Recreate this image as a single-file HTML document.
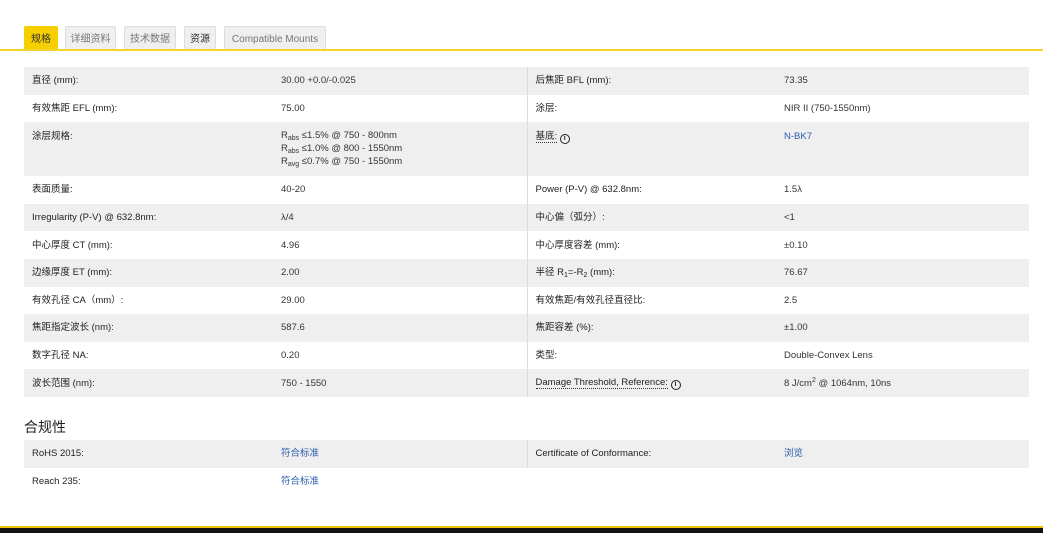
<!DOCTYPE html><html><head><meta charset="utf-8"><style>
body{margin:0;width:1043px;height:533px;overflow:hidden;background:#fff;font-family:"Liberation Sans","Noto Sans CJK SC",sans-serif;font-size:9.5px;color:#333;position:relative}
.tabs{position:absolute;left:0;top:0;width:1043px;height:51px;border-bottom:2px solid #f2d42c;box-sizing:border-box}
.tab{position:absolute;top:26px;height:23px;line-height:25px;background:#efefef;border:1px solid #ddd;border-bottom:none;box-sizing:border-box;text-align:center;color:#777;font-size:10px;border-radius:2px 2px 0 0}
.tab.a{background:#f7cf00;color:#333;border-color:#f7cf00}
table{position:absolute;left:24px;border-collapse:collapse;width:1005px;table-layout:fixed}
td{padding:0 8px;height:27.6px;vertical-align:middle;white-space:nowrap;line-height:13px}
td:nth-child(odd){color:#222}
tr.g td{background:#efefef}
td.c3{border-left:1px solid #ddd}
.b{color:#2a5db0}
sub{font-size:7px;vertical-align:-2px;line-height:0}
sup{font-size:7px;vertical-align:4px;line-height:0}
.dot{border-bottom:1px dotted #333}
.i{display:inline-block;width:8px;height:8px;border:1.5px solid #222;border-radius:50%;font-size:7px;line-height:8px;text-align:center;font-weight:bold;vertical-align:-1px}
h3{position:absolute;left:24px;top:417px;margin:0;font-size:14px;font-weight:normal;color:#222}
.foot{position:absolute;left:0;top:526px;width:1043px;height:7px;background:#111;border-top:2px solid #f2c200;box-sizing:border-box}
</style></head><body>
<div class="tabs">
<div class="tab a" style="left:24px;width:34px">规格</div>
<div class="tab" style="left:65px;width:51px">详细资料</div>
<div class="tab" style="left:124px;width:52px">技术数据</div>
<div class="tab" style="left:184px;width:32px;color:#333">资源</div>
<div class="tab" style="left:224px;width:102px">Compatible Mounts</div>
</div>
<table style="top:67px">
<colgroup><col style="width:249px"><col style="width:254px"><col style="width:249px"><col style="width:253px"></colgroup>
<tr class="g"><td>直径 (mm):</td><td>30.00 +0.0/-0.025</td><td class="c3">后焦距 BFL (mm):</td><td>73.35</td></tr>
<tr><td>有效焦距 EFL (mm):</td><td>75.00</td><td class="c3">涂层:</td><td>NIR II (750-1550nm)</td></tr>
<tr class="g"><td style="vertical-align:top;padding-top:8px;height:46px">涂层规格:</td><td style="vertical-align:top;padding-top:7px;line-height:13px">R<sub>abs</sub> ≤1.5% @ 750 - 800nm<br>R<sub>abs</sub> ≤1.0% @ 800 - 1550nm<br>R<sub>avg</sub> ≤0.7% @ 750 - 1550nm</td><td class="c3" style="vertical-align:top;padding-top:8px"><span class="dot">基底:</span> <span class="i">i</span></td><td class="b" style="vertical-align:top;padding-top:8px">N-BK7</td></tr>
<tr><td>表面质量:</td><td>40-20</td><td class="c3">Power (P-V) @ 632.8nm:</td><td>1.5λ</td></tr>
<tr class="g"><td>Irregularity (P-V) @ 632.8nm:</td><td>λ/4</td><td class="c3">中心偏（弧分）:</td><td>&lt;1</td></tr>
<tr><td>中心厚度 CT (mm):</td><td>4.96</td><td class="c3">中心厚度容差 (mm):</td><td>±0.10</td></tr>
<tr class="g"><td>边缘厚度 ET (mm):</td><td>2.00</td><td class="c3">半径 R<sub>1</sub>=-R<sub>2</sub> (mm):</td><td>76.67</td></tr>
<tr><td>有效孔径 CA（mm）:</td><td>29.00</td><td class="c3">有效焦距/有效孔径直径比:</td><td>2.5</td></tr>
<tr class="g"><td>焦距指定波长 (nm):</td><td>587.6</td><td class="c3">焦距容差 (%):</td><td>±1.00</td></tr>
<tr><td>数字孔径 NA:</td><td>0.20</td><td class="c3">类型:</td><td>Double-Convex Lens</td></tr>
<tr class="g"><td>波长范围 (nm):</td><td>750 - 1550</td><td class="c3"><span class="dot">Damage Threshold, Reference:</span> <span class="i">i</span></td><td>8 J/cm<sup>2</sup> @ 1064nm, 10ns</td></tr>
</table>
<h3>合规性</h3>
<table style="top:440px">
<colgroup><col style="width:249px"><col style="width:254px"><col style="width:249px"><col style="width:253px"></colgroup>
<tr class="g"><td>RoHS 2015:</td><td class="b">符合标准</td><td class="c3">Certificate of Conformance:</td><td class="b">浏览</td></tr>
<tr><td>Reach 235:</td><td class="b">符合标准</td><td></td><td></td></tr>
</table>
<div class="foot"></div>
</body></html>
